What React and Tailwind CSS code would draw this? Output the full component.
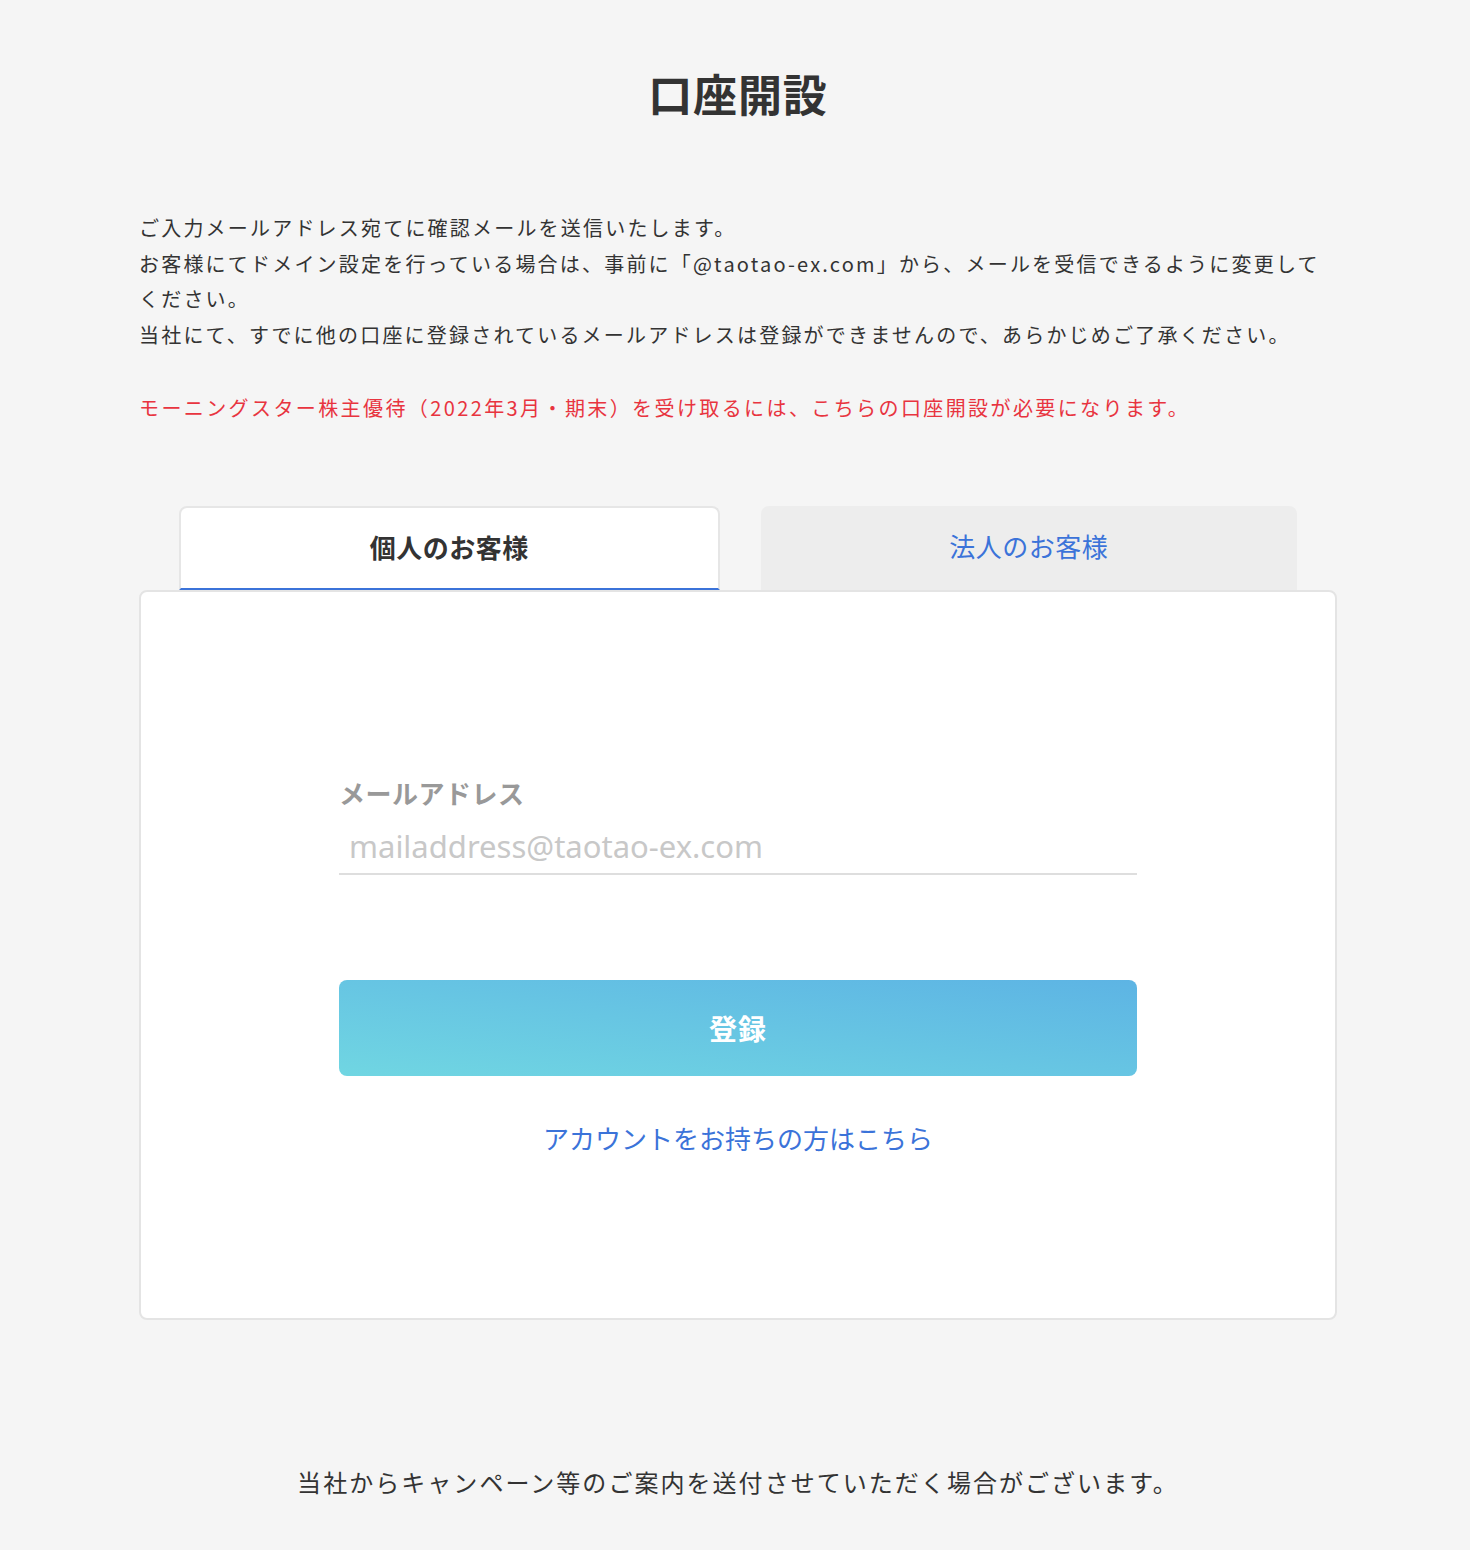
export default function App() {
  return (
    <div className="min-h-[1550px] bg-[#f5f5f5] font-['Noto_Sans_CJK_JP','Noto_Sans',sans-serif] text-[#333] pl-[6px]">
      <div className="w-[1198px] mx-auto pt-[57px] pb-[51px]">
        <h1 className="text-center text-[44px] leading-[72px] font-bold text-[#333] tracking-[0.02em]">口座開設</h1>

        <div className="mt-[81px] text-[20px] leading-[35.7px] tracking-[0.11em]">
          <p>ご入力メールアドレス宛てに確認メールを送信いたします。</p>
          <p>お客様にてドメイン設定を行っている場合は、事前に「@taotao-ex.com」から、メールを受信できるように変更して<br />ください。</p>
          <p>当社にて、すでに他の口座に登録されているメールアドレスは登録ができませんので、あらかじめご了承ください。</p>
          <p className="mt-[37px] text-[#e8343f] tracking-[0.12em]">モーニングスター株主優待（2022年3月・期末）を受け取るには、こちらの口座開設が必要になります。</p>
        </div>

        <div className="mt-[80px] flex gap-[41px] px-[40px]">
          <div className="flex-1 h-[84px] bg-white border-2 border-[#e6e6e6] border-b-[#3b73d9] rounded-t-lg flex items-center justify-center">
            <span className="text-[26px] leading-[36px] font-bold text-[#333] tracking-[0.02em] -mt-[2px]">個人のお客様</span>
          </div>
          <div className="flex-1 h-[84px] bg-[#ededed] rounded-t-lg flex items-center justify-center">
            <span className="text-[26px] leading-[36px] text-[#3b73d9] tracking-[0.02em] -mt-[3px]">法人のお客様</span>
          </div>
        </div>

        <div className="bg-white border-2 border-[#e4e4e4] rounded-lg px-[198px] pt-[183px] pb-[162px]">
          <label className="block text-[26px] leading-[36px] font-bold text-[#999] tracking-[0.02em]">メールアドレス</label>
          <input
            type="text"
            placeholder="mailaddress@taotao-ex.com"
            className="mt-[4px] block w-full h-[60px] pl-[10px] pt-[5px] text-[31px] border-b-2 border-[#dedede] outline-none placeholder:text-[#c8c8c8] font-['Noto_Sans',sans-serif]"
          />
          <button className="mt-[105px] w-full h-[96px] rounded-lg bg-[linear-gradient(to_top_right,#70d6e2,#5db4e4)] text-white text-[28px] font-bold tracking-[0.04em]">
            登録
          </button>
          <div className="mt-[44px] text-center">
            <a className="text-[26px] leading-[36px] text-[#3b73d9]">アカウントをお持ちの方はこちら</a>
          </div>
        </div>

        <p className="mt-[144px] text-center text-[24px] leading-[36px] tracking-[0.085em] text-[#333]">当社からキャンペーン等のご案内を送付させていただく場合がございます。</p>
      </div>
    </div>
  );
}
